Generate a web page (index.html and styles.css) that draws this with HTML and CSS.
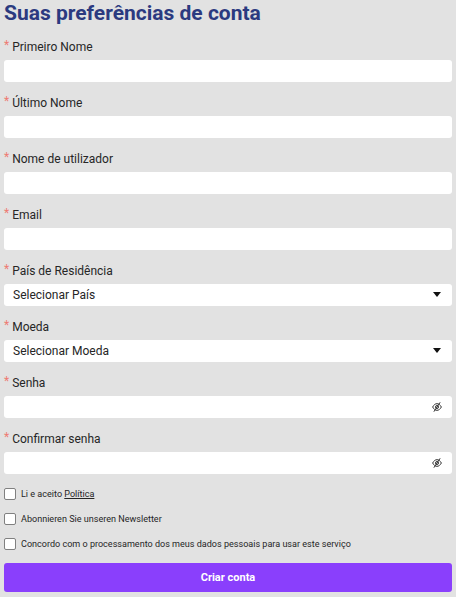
FILE: index.html
```html
<!DOCTYPE html>
<html>
<head>
  <meta charset="UTF-8">
  <link rel="stylesheet" href="styles.css">
</head>
<body>
  <h1 class="page-title">Suas preferências de conta</h1>
  <form class="account-form">
    <div class="field">
      <label class="field-label"><span class="required">*</span> Primeiro Nome</label>
      <div class="input-box"></div>
    </div>
    <div class="field">
      <label class="field-label"><span class="required">*</span> Último Nome</label>
      <div class="input-box"></div>
    </div>
    <div class="field">
      <label class="field-label"><span class="required">*</span> Nome de utilizador</label>
      <div class="input-box"></div>
    </div>
    <div class="field">
      <label class="field-label"><span class="required">*</span> Email</label>
      <div class="input-box"></div>
    </div>
    <div class="field">
      <label class="field-label"><span class="required">*</span> País de Residência</label>
      <div class="input-box select-box">Selecionar País<span class="caret"></span></div>
    </div>
    <div class="field">
      <label class="field-label"><span class="required">*</span> Moeda</label>
      <div class="input-box select-box">Selecionar Moeda<span class="caret"></span></div>
    </div>
    <div class="field">
      <label class="field-label"><span class="required">*</span> Senha</label>
      <div class="input-box password-box">
        <svg class="eye-icon" viewBox="0 0 16 16" width="10" height="10">
          <path d="M1 8c2-3.600 4.300-5.300 7-5.300s5 1.700 7 5.300c-2 3.600-4.300 5.300-7 5.300S3 11.600 1 8z" fill="none" stroke="#333" stroke-width="1.600"/>
          <circle cx="8" cy="8" r="2.400" fill="none" stroke="#333" stroke-width="1.600"/>
          <path d="M3 15.500L13 .5" stroke="#333" stroke-width="1.600"/>
        </svg>
      </div>
    </div>
    <div class="field">
      <label class="field-label"><span class="required">*</span> Confirmar senha</label>
      <div class="input-box password-box">
        <svg class="eye-icon" viewBox="0 0 16 16" width="10" height="10">
          <path d="M1 8c2-3.600 4.300-5.300 7-5.300s5 1.700 7 5.300c-2 3.600-4.300 5.300-7 5.300S3 11.600 1 8z" fill="none" stroke="#333" stroke-width="1.600"/>
          <circle cx="8" cy="8" r="2.400" fill="none" stroke="#333" stroke-width="1.600"/>
          <path d="M3 15.500L13 .5" stroke="#333" stroke-width="1.600"/>
        </svg>
      </div>
    </div>
    <div class="checks">
      <div class="check-row"><span class="check-box"></span><span>Li e aceito <a class="policy-link">Política</a></span></div>
      <div class="check-row"><span class="check-box"></span><span>Abonnieren Sie unseren Newsletter</span></div>
      <div class="check-row"><span class="check-box"></span><span>Concordo com o processamento dos meus dados pessoais para usar este serviço</span></div>
    </div>
    <button class="submit-button" type="button">Criar conta</button>
  </form>
</body>
</html>
```

FILE: styles.css
```css
body {
  margin: 0;
  padding: 0 4px;
  height: 597px;
  box-sizing: border-box;
  overflow: hidden;
  background: #e2e2e2;
  color: #262626;
  font-family: Roboto, "Liberation Sans", sans-serif;
}

.page-title {
  margin: 0;
  height: 28px;
  line-height: 26px;
  font-size: 21px;
  font-weight: 700;
  color: #2b3a80;
}

.account-form {
  display: flex;
  flex-direction: column;
}

.field {
  height: 56px;
  display: flex;
  flex-direction: column;
}

.field-label {
  height: 32px;
  line-height: 38px;
  font-size: 12px;
}

.required {
  color: #ee7b72;
  position: relative;
  top: -2px;
}

.input-box {
  height: 21.500px;
  background: #fff;
  border-radius: 3px;
  display: flex;
  align-items: center;
  font-size: 12px;
  padding: 0 9px;
}

.select-box {
  justify-content: space-between;
  padding-right: 11px;
}

.password-box {
  justify-content: flex-end;
  padding-right: 10px;
}

.caret {
  width: 0;
  height: 0;
  border-left: 4px solid transparent;
  border-right: 4px solid transparent;
  border-top: 5px solid #111;
}

.checks {
  margin-top: 10px;
  display: flex;
  flex-direction: column;
  gap: 9px;
}

.check-row {
  height: 16px;
  display: flex;
  align-items: center;
  gap: 5px;
  font-size: 9.050px;
}

.check-box {
  width: 10px;
  height: 10px;
  background: #fff;
  border: 1px solid #808080;
  border-radius: 2px;
}

.policy-link {
  text-decoration: underline;
}

.submit-button {
  margin-top: 11px;
  height: 29px;
  border: none;
  border-radius: 3px;
  background: #8a3ffc;
  color: #fff;
  font-family: inherit;
  font-size: 11px;
  font-weight: 700;
}
```
